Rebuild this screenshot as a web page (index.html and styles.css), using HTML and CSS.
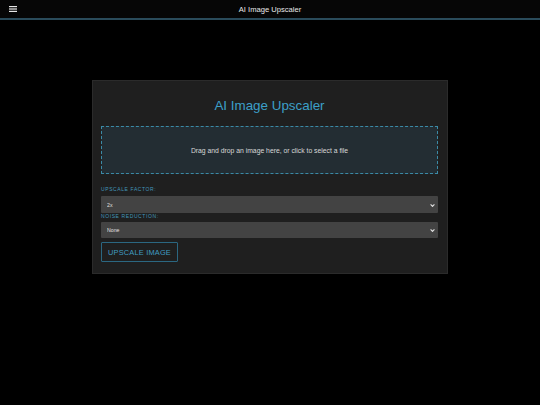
FILE: index.html
```
<!DOCTYPE html>
<html lang="en">
<head>
<meta charset="utf-8">
<title>AI Image Upscaler</title>
<link rel="stylesheet" href="styles.css">
</head>
<body>
<header class="topbar">
  <svg class="menu-icon" width="8" height="6" viewBox="0 0 8 6"><rect x="0" y="0" width="8" height="1.2" fill="#e6e6e6"/><rect x="0" y="2.4" width="8" height="1.2" fill="#e6e6e6"/><rect x="0" y="4.8" width="8" height="1.2" fill="#e6e6e6"/></svg>
  <span class="topbar-title">AI Image Upscaler</span>
</header>
<main class="page">
  <section class="card">
    <h1 class="card-title">AI Image Upscaler</h1>
    <div class="dropzone">Drag and drop an image here, or click to select a file</div>
    <label class="field-label" for="factor">UPSCALE FACTOR:</label>
    <div class="select-wrap tall">
      <select id="factor" class="select"><option>2x</option><option>4x</option></select>
      <svg class="chev" width="5" height="3" viewBox="0 0 5 3"><path d="M0.6 0.4 L2.5 2.4 L4.4 0.4" stroke="#e0e0e0" stroke-width="1.1" fill="none"/></svg>
    </div>
    <label class="field-label tight" for="noise">NOISE REDUCTION:</label>
    <div class="select-wrap">
      <select id="noise" class="select"><option>None</option><option>Low</option></select>
      <svg class="chev" width="5" height="3" viewBox="0 0 5 3"><path d="M0.6 0.4 L2.5 2.4 L4.4 0.4" stroke="#e0e0e0" stroke-width="1.1" fill="none"/></svg>
    </div>
    <button class="btn">UPSCALE IMAGE</button>
  </section>
</main>
</body>
</html>
```
FILE: styles.css
```
* { box-sizing: border-box; }
html, body { margin: 0; padding: 0; background: #000; }
body { font-family: "Liberation Sans", Arial, sans-serif; color: #ddd; }

.topbar {
  height: 20px;
  background: #060606;
  border-bottom: 2px solid #2a4b5b;
  display: flex;
  align-items: center;
  padding-left: 9px;
  position: relative;
}
.menu-icon { display: block; }
.topbar-title {
  position: absolute;
  left: 0; right: 0; top: 5px;
  text-align: center;
  font-size: 7.6px;
  line-height: 10px;
  color: #e8e8e8;
  pointer-events: none;
}

.page { display: flex; justify-content: center; padding-top: 60px; }

.card {
  width: 356px;
  background: #1f1f1f;
  border: 1px solid #2b2b2b;
  padding: 8px 9px 11px 8px;
  display: flex;
  flex-direction: column;
}
.card-title {
  margin: 9px 0 12px;
  text-align: center;
  font-weight: normal;
  font-size: 13.4px;
  line-height: 16px;
  color: #3c9fc8;
}
.dropzone {
  height: 48px;
  border: 1px dashed #3b8aa6;
  background: #232d33;
  display: flex;
  align-items: center;
  justify-content: center;
  font-size: 6.8px;
  color: #d8d8d8;
  margin-bottom: 12px;
}
.field-label {
  display: block;
  font-size: 5px;
  line-height: 6px;
  letter-spacing: 0.6px;
  color: #4396ba;
  margin-bottom: 4px;
}
.field-label.tight { margin-bottom: 3px; }
.select-wrap { position: relative; height: 16px; font-size: 5.2px; line-height: 0; }
.select-wrap.tall { height: 17px; }
.select {
  display: block;
  -webkit-appearance: none;
  appearance: none;
  width: 100%;
  height: 100%;
  background: #434343;
  border: none;
  border-radius: 1px;
  color: #e0e0e0;
  font-family: inherit;
  font-size: 5.2px;
  padding: 0 6px;
  outline: none;
}
.chev { position: absolute; right: 3px; top: 50%; margin-top: -1px; }
.btn {
  align-self: flex-start;
  margin-top: 4px;
  width: 77px;
  height: 20px;
  background: transparent;
  border: 1px solid #2b6781;
  border-radius: 1px;
  color: #3f9cc2;
  font-family: inherit;
  font-size: 7.4px;
  letter-spacing: 0.2px;
  padding: 0;
}
```
